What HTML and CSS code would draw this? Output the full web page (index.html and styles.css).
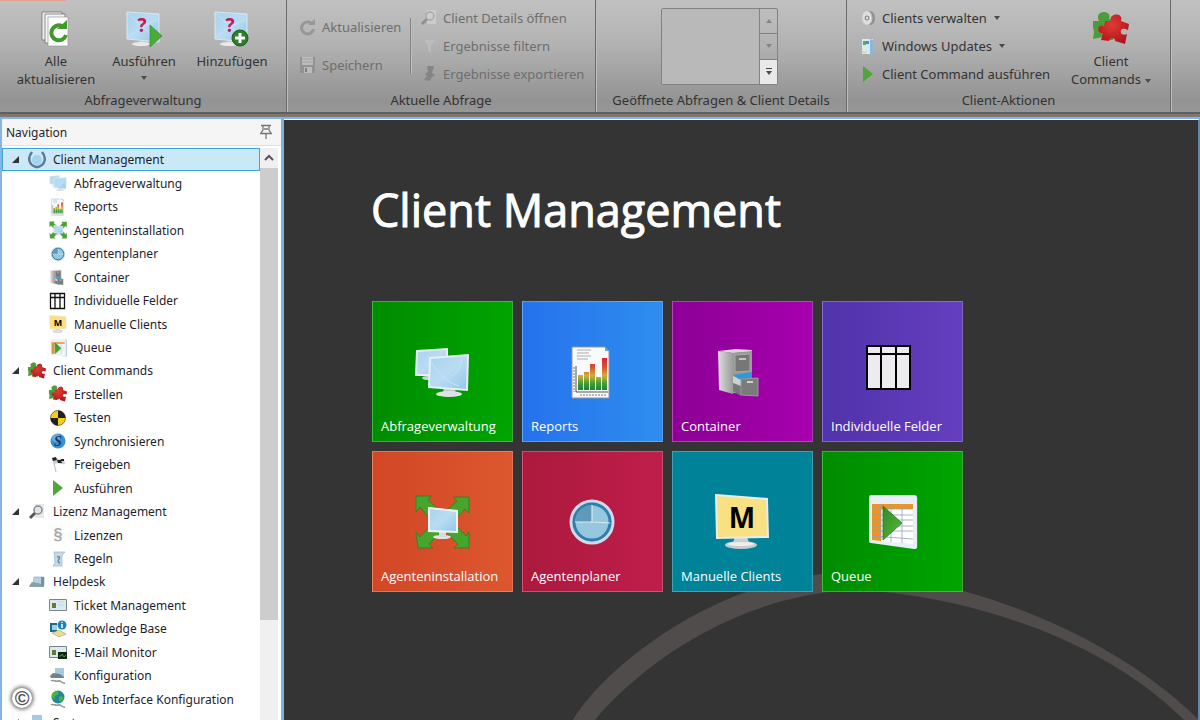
FILE: index.html
```
<!DOCTYPE html>
<html lang="de">
<head>
  <meta charset="UTF-8" />
  <meta name="viewport" content="width=device-width, initial-scale=1" />
  <title>Client Management</title>
  <link rel="stylesheet" href="styles.css">
</head>
<body>
  <svg class="defs" aria-hidden="true">
    <defs>
      <linearGradient id="g-screen" x1="0" y1="0" x2="1" y2="1">
        <stop offset="0" stop-color="#a9d3ee"/><stop offset=".5" stop-color="#b9dcf3"/><stop offset="1" stop-color="#93c5e8"/>
      </linearGradient>
      <linearGradient id="g-bar" gradientUnits="userSpaceOnUse" x1="0" y1="14" x2="0" y2="46">
        <stop offset="0" stop-color="#d8213c"/><stop offset=".3" stop-color="#d9552f"/><stop offset=".55" stop-color="#d3b03a"/><stop offset=".8" stop-color="#3f9d37"/><stop offset="1" stop-color="#1d8436"/>
      </linearGradient>
      <linearGradient id="g-metal" x1="0" y1="0" x2="1" y2="0">
        <stop offset="0" stop-color="#dcdcdc"/><stop offset="1" stop-color="#9b9b9b"/>
      </linearGradient>
      <linearGradient id="g-play" x1="0" y1="0" x2="1" y2="1">
        <stop offset="0" stop-color="#2f8c26"/><stop offset="1" stop-color="#5cb93c"/>
      </linearGradient>
      <radialGradient id="g-red" cx=".45" cy=".35" r=".8">
        <stop offset="0" stop-color="#e23a35"/><stop offset="1" stop-color="#a30d14"/>
      </radialGradient>

      <symbol id="i-monitors" viewBox="0 0 56 56">
        <ellipse cx="14" cy="34" rx="6" ry="2" fill="#c9d2d8"/>
        <path d="M3 7 33 5v26L2 31z" fill="url(#g-screen)" stroke="#e6eef4" stroke-width="2"/>
        <path d="M30 42h10l2 7H29z" fill="#c3c8cc"/>
        <ellipse cx="35" cy="50" rx="13" ry="3" fill="#dfe2e4"/>
        <path d="M16 14 54 11 53 46 15 43z" fill="url(#g-screen)" stroke="#e6eef4" stroke-width="2"/>
        <path d="M17 18q12 20 28 24M48 14q-2 14-10 18" fill="none" stroke="#c6e3f7" stroke-width="1"/>
      </symbol>
      <symbol id="i-report" viewBox="0 0 56 56">
        <path d="M8 3h33l4 4v47H8z" fill="#fafafa" stroke="#8f979f" stroke-width="1"/>
        <path d="M41 3v4h4z" fill="#5aa7ea"/>
        <path d="M13 6h14M13 9h12M13 12h14M13 15h11" stroke="#aaa" stroke-width="1"/>
        <g fill="url(#g-bar)"><rect x="14" y="31" width="5" height="15"/><rect x="20" y="28" width="5" height="18"/><rect x="26" y="20" width="5" height="26"/><rect x="32" y="33" width="5" height="13"/><rect x="38" y="14" width="5" height="32"/></g>
        <path d="M12 22v26h32" fill="none" stroke="#555"/>
        <path d="M10 23v25M16 51h26" stroke="#777" stroke-dasharray="2 1"/>
      </symbol>
      <symbol id="i-expand" viewBox="0 0 56 56">
        <g fill="#45a52c" stroke="#2d7d1e" stroke-width=".8">
          <path d="M2 2h15l-3 4 12 11-9 9L6 13l-4 5z"/>
          <path d="M55 3H39l4 4-12 11 9 9 11-12 4 4z"/>
          <path d="M4 54h15l-4-4 12-12-9-8L6 43l-4-5z"/>
          <path d="M55 54H40l4-4-12-12 9-8 11 12 3-4z"/>
        </g>
        <ellipse cx="28" cy="43" rx="9" ry="2" fill="#e4e4e4"/>
        <path d="M25 37h7v6h-7z" fill="#d5dadd"/>
        <path d="M15 14 43 17v21l-28-1z" fill="url(#g-screen)" stroke="#edf3f7" stroke-width="2"/>
      </symbol>
      <symbol id="i-clock" viewBox="0 0 56 56">
        <circle cx="28" cy="28" r="21" fill="#8fc4df" stroke="#cfdbe6" stroke-width="3"/>
        <circle cx="28" cy="28" r="18" fill="#95c8df" stroke="#2f7fae" stroke-width="3"/>
        <path d="M28 28V11a17 17 0 0 0-17 17z" fill="#5f9bb8"/>
        <path d="M28 11v17l18 1M11 28h17" fill="none" stroke="#dceaf2" stroke-width="1.200"/>
      </symbol>
      <symbol id="i-cabinet" viewBox="0 0 56 56">
        <path d="M4 7 19 9v41L5 46z" fill="url(#g-metal)"/>
        <path d="M4 7 22 5l16 1-1 2-18 1z" fill="#d7d7d7"/>
        <path d="M19 9 38 7v43l-19-1z" fill="#9a9a9a"/>
        <path d="M21 11 36 10v17l-15 1z" fill="#777" stroke="#a9a9a9"/>
        <path d="M25 15h7" stroke="#ddd" stroke-width="1.500"/>
        <path d="M19 31 38 28v7l-11 2z" fill="#2d9ad8"/>
        <path d="M19 32l8 4v14l-8-4z" fill="#cfcfcf"/>
        <path d="M19 39l8 3v10l-8-5z" fill="#777"/>
        <path d="M27 35l17-1v18l-17-1z" fill="#7b7b7b" stroke="#9a9a9a"/>
        <path d="M33 38h6" stroke="#eee" stroke-width="1.500"/>
      </symbol>
      <symbol id="i-table" viewBox="0 0 56 56">
        <path d="M3 2h43v43H3z" fill="#ececef"/>
        <path d="M3 2h43v43H3zM3 10h43M17 2v43M32 2v43" fill="none" stroke="#000" stroke-width="2"/>
      </symbol>
      <symbol id="i-table-sm" viewBox="0 0 18 18">
        <path d="M1.500 1.500h14v15h-14zM1.500 5.500h14M6 1.500v15M11 1.500v15" fill="#fff" stroke="#111" stroke-width="1.300"/>
      </symbol>
      <symbol id="i-mclient" viewBox="0 0 56 56">
        <path d="M21 43h12l3 8H18z" fill="#cfcfcf"/>
        <ellipse cx="27" cy="51" rx="16" ry="4" fill="#c9ccce"/>
        <ellipse cx="27" cy="50" rx="13" ry="2" fill="#eee"/>
        <path d="M2 1 53 5 54 43 3 44z" fill="#f7e183" stroke="#e9ecec" stroke-width="2"/>
        <text x="28" y="34" class="glyph-m">M</text>
      </symbol>
      <symbol id="i-queue" viewBox="0 0 56 56">
        <path d="M50 1l4 2v51l-4 1z" fill="#2f7fc0"/>
        <path d="M7 1h43q3 0 3 3v49q0 2-3 2L7 49q-2 0-2-2V3q0-2 2-2z" fill="#e8eff7"/>
        <path d="M8 10h41v40L8 46z" fill="#fff"/>
        <path d="M8 10h41v5H17v32l-9-1z" fill="#ee9420"/>
        <path d="M8 15h41M8 21h41M8 26h41M8 32h41M8 37h41M8 42l41 3M17 10v36M27 10v38M38 10v39" stroke="#8fa2c2" stroke-width=".8"/>
        <path d="M19 12 38 29 19 46z" fill="url(#g-play)" stroke="#2a7a22" stroke-width=".8"/>
      </symbol>
      <symbol id="i-puzzle" viewBox="0 0 36 36">
        <path d="M0 10h6c-3-6 1-9 5-9s7 3 5 7h4v21H13l-4-3-4 1-5 1 1-7-1-5z" fill="#4c9c3c"/>
        <path d="M12 10h6c-3-6 8-9 10-4 1 2 0 3 0 4l8 3-1 6c-6-3-8 0-7 3 1 2 4 2 6 1l-2 10-10-3c1-3-5-4-6 0l-8-1 2-7c-4 1-6-4-4-6 2-3 5-1 5 0z" fill="url(#g-red)"/>
      </symbol>
      <symbol id="i-hazard" viewBox="0 0 18 18">
        <circle cx="9" cy="9" r="7.500" fill="#f3cf1c" stroke="#333" stroke-width=".6"/>
        <path d="M9 9V1.500a7.500 7.500 0 0 1 7.500 7.500zM9 9v7.500a7.500 7.500 0 0 1-7.500-7.500z" fill="#1f1f26"/>
      </symbol>
      <symbol id="i-sync" viewBox="0 0 18 18">
        <circle cx="9" cy="9" r="7.500" fill="#3a8fce"/><circle cx="7" cy="6" r="4" fill="#7fbde8" opacity=".6"/>
        <text x="9" y="14" class="glyph-s">S</text>
      </symbol>
      <symbol id="i-flag" viewBox="0 0 18 18">
        <path d="M4 3l3 13" stroke="#bbb" stroke-width="1"/>
        <path d="M3 2c4-2 5 2 9 1l3 0 1 5c-4 1-5-2-11 0z" fill="#ccc"/>
        <path d="M3 2l4-1 1 3-4 1zM8 4l4 0 1 3-4 0zM12 3l3 0v2h-3z" fill="#222"/>
      </symbol>
      <symbol id="i-play" viewBox="0 0 18 18"><path d="M4 1l10 8-10 8z" fill="#4fa63b"/></symbol>
      <symbol id="i-wreath" viewBox="0 0 18 18">
        <circle cx="9" cy="9" r="5" fill="#a3d3f0"/>
        <path d="M4 1C-1 7 1 14 8 16h2C17 14 19 7 14 1" fill="none" stroke="#5b7c96" stroke-width="2.500"/>
      </symbol>
      <symbol id="i-lens" viewBox="0 0 18 18">
        <path d="M7 1h9v14H7z" fill="#e8e8e8"/>
        <path d="M2 15l5-5" stroke="#555" stroke-width="3"/>
        <circle cx="10" cy="7" r="4" fill="#dfe8ee" stroke="#888" stroke-width="1.500"/>
      </symbol>
      <symbol id="i-para" viewBox="0 0 18 18"><text x="9" y="14" class="glyph-p">§</text></symbol>
      <symbol id="i-scroll" viewBox="0 0 18 18">
        <path d="M5 2h11l-3 3v11H4l2-3z" fill="#c3d9e8" stroke="#9db4c4" stroke-width=".7"/>
        <path d="M8 7q4-1 2 2t1 4" fill="none" stroke="#6d8ca4" stroke-width="1.500"/>
      </symbol>
      <symbol id="i-desk" viewBox="0 0 18 18">
        <path d="M6 4h10v8H5z" fill="#b5d1e0" stroke="#8aa1af" stroke-width=".6"/>
        <path d="M1 13l3-4 6 1 6 2v2H2z" fill="#8ba0ab"/><path d="M13 4h3v9h-3z" fill="#6e94ab"/>
      </symbol>
      <symbol id="i-ticket" viewBox="0 0 18 18">
        <path d="M.5 3.500h17v11H.5z" fill="#dce9ed" stroke="#78858c"/>
        <path d="M3 7h4v5H3z" fill="#5f7d35"/><path d="M9 6h6M9 9h6" stroke="#c4d8e2"/>
      </symbol>
      <symbol id="i-book" viewBox="0 0 18 18">
        <path d="M1 3h7v9H1z" fill="#1f6c86"/><path d="M3 5h5v5H3z" fill="#9fd0e0"/>
        <path d="M3 13l7-3 7 4-7 3z" fill="#e9dc9a" stroke="#938a55" stroke-width=".5"/>
        <circle cx="13" cy="5" r="4.500" fill="#1c82ba"/><path d="M13 4v4M13 2v1" stroke="#fff" stroke-width="1.500"/>
      </symbol>
      <symbol id="i-mail" viewBox="0 0 18 18">
        <path d="M.5 3.500h17v11H.5z" fill="#dce9ed" stroke="#78858c"/>
        <path d="M3 7h4v5H3z" fill="#5f7d35"/><path d="M9 9h9v7H9z" fill="#10240f"/>
        <path d="M10 13h2l1-2 2 3 2-2" fill="none" stroke="#4bbd47" stroke-width=".8"/>
      </symbol>
      <symbol id="i-config" viewBox="0 0 18 18">
        <path d="M6 1h9v9H6z" fill="#a9c9dc"/><path d="M1 9l3-3 7 1 4 3v1H2z" fill="#6d8492"/>
        <path d="M2 14c2-2 4 1 7 0s4 3 7 2" fill="none" stroke="#93989c" stroke-width="1.500"/>
      </symbol>
      <symbol id="i-globe" viewBox="0 0 18 18">
        <circle cx="9" cy="7" r="6.500" fill="#1d8a95"/>
        <path d="M5 2c4-2 6 0 4 2S5 6 6 8s-2 1-3-1 0-4 2-5zM10 7c3-2 5 0 4 2s-4 4-4 1z" fill="#48b441"/>
        <path d="M2 15c2-2 4 1 7 0s4 3 7 2" fill="none" stroke="#93989c" stroke-width="1.500"/>
      </symbol>
      <symbol id="i-system" viewBox="0 0 18 18"><path d="M4 1h10v16H4z" fill="#a5c9e2"/></symbol>

      <symbol id="i-query" viewBox="0 0 36 36">
        <path d="M13 30h9l1 4H11z" fill="#ccc"/><ellipse cx="15" cy="33" rx="9" ry="2" fill="#e9e9e9"/>
        <path d="M1 1 33 3v28L1 28z" fill="url(#g-screen)" stroke="#dce7ee"/>
        <path d="M2 2l14 14L32 8M2 26l14-10 16 12" fill="none" stroke="#c9e4f5" stroke-width=".8"/>
        <text x="16" y="21" class="glyph-q">?</text>
      </symbol>
      <symbol id="i-refresh" viewBox="0 0 18 18">
        <path d="M12 5a6 6 0 1 0 2.500 6" fill="none" stroke="currentColor" stroke-width="3"/>
        <path d="M9 7h7V1z" fill="currentColor"/>
      </symbol>
      <symbol id="i-save" viewBox="0 0 18 18">
        <path d="M1 1h15v16H1z" fill="#929292"/><path d="M3 1h11v8H3z" fill="#bcbcbc"/><path d="M3 3h11M3 6h11" stroke="#a4a4a4"/>
        <path d="M5 11h8v6H5z" fill="#bbb"/><path d="M6 12h2v4H6z" fill="#808080"/>
      </symbol>
      <symbol id="i-funnel" viewBox="0 0 18 18"><path d="M4 3h11l-4 6v7l-3-2V9z" fill="#bcbcbc"/></symbol>
      <symbol id="i-export" viewBox="0 0 18 18"><path d="M7 1h7l-2 7 3 2-3 2-2 4-6-1 3-4-2-2 3-2z" fill="#858585"/></symbol>
      <symbol id="i-gear" viewBox="0 0 18 18">
        <ellipse cx="11" cy="9" rx="5" ry="7" fill="#8f8f8f"/><ellipse cx="8" cy="9" rx="5" ry="7" fill="#dedede" stroke="#c4c4c4" stroke-dasharray="2 1"/>
        <circle cx="8" cy="9" r="2" fill="none" stroke="#777"/>
      </symbol>
      <symbol id="i-update" viewBox="0 0 18 18">
        <path d="M3 2h11v15H3z" fill="#d9e9f3"/><path d="M11 2l3 1v14h-3z" fill="#86b9de"/>
        <path d="M4 4h3v4H4z" fill="#5fae4d"/><path d="M7 4h3v3H7z" fill="#3f8fd0"/><path d="M2 14q4 3 6 0" stroke="#d8c85d" fill="none"/>
      </symbol>
    </defs>
  </svg>

  <header class="ribbon">
    <section class="group group-query">
      <div class="group-body">
        <button class="big">
          <svg viewBox="0 0 36 36">
            <path d="M4 1h20v28H4z" fill="#eee" stroke="#666" stroke-width=".7"/>
            <path d="M7 3h20v29H7z" fill="#f4f4f4" stroke="#666" stroke-width=".7"/>
            <path d="M10 6h20v29H10z" fill="#fff" stroke="#999" stroke-width=".7"/>
            <path d="M24 15a7.500 7.500 0 1 0 4 9" fill="none" stroke="#3f9a2c" stroke-width="4"/>
            <path d="M19 18h10V9z" fill="#3f9a2c"/>
          </svg>
          <span>Alle<br>aktualisieren</span>
        </button>
        <button class="big">
          <svg viewBox="0 0 36 36"><use href="#i-query"/><path d="M24 14l12 11-12 11z" fill="#4bab38" stroke="#2f8425" stroke-width=".6"/></svg>
          <span>Ausführen</span>
          <i class="caret"></i>
        </button>
        <button class="big">
          <svg viewBox="0 0 36 36"><use href="#i-query"/><circle cx="26" cy="27" r="8" fill="#2e7d28" stroke="#1e5c1d"/><path d="M26 22v10M21 27h10" stroke="#fff" stroke-width="3"/></svg>
          <span>Hinzufügen</span>
        </button>
      </div>
      <h2>Abfrageverwaltung</h2>
    </section>

    <section class="group group-current">
      <div class="group-body">
        <div class="stack two">
          <button class="small" disabled><svg class="dim"><use href="#i-refresh"/></svg>Aktualisieren</button>
          <button class="small" disabled><svg><use href="#i-save"/></svg>Speichern</button>
        </div>
        <div class="stack split">
          <button class="small" disabled><svg class="faded"><use href="#i-lens"/></svg>Client Details öffnen</button>
          <button class="small" disabled><svg><use href="#i-funnel"/></svg>Ergebnisse filtern</button>
          <button class="small" disabled><svg><use href="#i-export"/></svg>Ergebnisse exportieren</button>
        </div>
      </div>
      <h2>Aktuelle Abfrage</h2>
    </section>

    <section class="group group-open">
      <div class="group-body">
        <div class="gallery">
          <div class="gallery-list"></div>
          <div class="gallery-buttons">
            <button disabled aria-label="Nach oben"><i class="caret up"></i></button>
            <button disabled aria-label="Nach unten"><i class="caret"></i></button>
            <button class="more" aria-label="Mehr"><i class="caret"></i></button>
          </div>
        </div>
      </div>
      <h2>Geöffnete Abfragen &amp; Client Details</h2>
    </section>

    <section class="group group-actions">
      <div class="group-body">
        <div class="stack">
          <button class="small"><svg><use href="#i-gear"/></svg>Clients verwalten<i class="caret"></i></button>
          <button class="small"><svg><use href="#i-update"/></svg>Windows Updates<i class="caret"></i></button>
          <button class="small"><svg><use href="#i-play"/></svg>Client Command ausführen</button>
        </div>
        <button class="big">
          <svg><use href="#i-puzzle"/></svg>
          <span>Client<br>Commands<i class="caret"></i></span>
        </button>
      </div>
      <h2>Client-Aktionen</h2>
    </section>
  </header>

  <div class="workspace">
    <aside class="nav">
      <div class="nav-head">
        <h2>Navigation</h2>
        <svg class="pin" viewBox="0 0 14 16"><path d="M2 1.500h10M4 2v4L2 9M10 2v4l2 3M1 9.500h12M7 10v5M5 5h4" fill="none" stroke="#777" stroke-width="1.300"/></svg>
      </div>
      <div class="nav-body">
        <ul class="tree">
          <li>
            <a class="node selected" href="#"><i class="twist"></i><svg><use href="#i-wreath"/></svg>Client Management</a>
            <ul>
              <li><a href="#"><svg><use href="#i-monitors"/></svg>Abfrageverwaltung</a></li>
              <li><a href="#"><svg><use href="#i-report"/></svg>Reports</a></li>
              <li><a href="#"><svg><use href="#i-expand"/></svg>Agenteninstallation</a></li>
              <li><a href="#"><svg><use href="#i-clock"/></svg>Agentenplaner</a></li>
              <li><a href="#"><svg><use href="#i-cabinet"/></svg>Container</a></li>
              <li><a href="#"><svg><use href="#i-table-sm"/></svg>Individuelle Felder</a></li>
              <li><a href="#"><svg><use href="#i-mclient"/></svg>Manuelle Clients</a></li>
              <li><a href="#"><svg><use href="#i-queue"/></svg>Queue</a></li>
            </ul>
          </li>
          <li>
            <a class="node" href="#"><i class="twist"></i><svg><use href="#i-puzzle"/></svg>Client Commands</a>
            <ul>
              <li><a href="#"><svg><use href="#i-puzzle"/></svg>Erstellen</a></li>
              <li><a href="#"><svg><use href="#i-hazard"/></svg>Testen</a></li>
              <li><a href="#"><svg><use href="#i-sync"/></svg>Synchronisieren</a></li>
              <li><a href="#"><svg><use href="#i-flag"/></svg>Freigeben</a></li>
              <li><a href="#"><svg><use href="#i-play"/></svg>Ausführen</a></li>
            </ul>
          </li>
          <li>
            <a class="node" href="#"><i class="twist"></i><svg><use href="#i-lens"/></svg>Lizenz Management</a>
            <ul>
              <li><a href="#"><svg><use href="#i-para"/></svg>Lizenzen</a></li>
              <li><a href="#"><svg><use href="#i-scroll"/></svg>Regeln</a></li>
            </ul>
          </li>
          <li>
            <a class="node" href="#"><i class="twist"></i><svg><use href="#i-desk"/></svg>Helpdesk</a>
            <ul>
              <li><a href="#"><svg><use href="#i-ticket"/></svg>Ticket Management</a></li>
              <li><a href="#"><svg><use href="#i-book"/></svg>Knowledge Base</a></li>
              <li><a href="#"><svg><use href="#i-mail"/></svg>E-Mail Monitor</a></li>
              <li><a href="#"><svg><use href="#i-config"/></svg>Konfiguration</a></li>
              <li><a href="#"><svg><use href="#i-globe"/></svg>Web Interface Konfiguration</a></li>
            </ul>
          </li>
          <li>
            <a class="node" href="#"><i class="twist"></i><svg><use href="#i-system"/></svg>System</a>
          </li>
        </ul>
        <div class="scrollbar">
          <svg viewBox="0 0 18 20"><path d="M5 12l4-4 4 4" fill="none" stroke="#555" stroke-width="2"/></svg>
          <div class="thumb"></div>
        </div>
      </div>
      <span class="copyright">©</span>
    </aside>

    <main class="start">
      <svg class="arc" viewBox="574 570 625 150" aria-hidden="true">
        <path d="M574 720C605 668 718 575 850 572 920 572 1090 612 1200 720H1185C1085 620 920 590 850 590 722 598 628 680 596 720z" fill="#504c4c"/>
      </svg>
      <h1>Client Management</h1>
      <div class="tiles">
        <a class="tile green" href="#"><svg><use href="#i-monitors"/></svg><span>Abfrageverwaltung</span></a>
        <a class="tile blue" href="#"><svg><use href="#i-report"/></svg><span>Reports</span></a>
        <a class="tile purple" href="#"><svg><use href="#i-cabinet"/></svg><span>Container</span></a>
        <a class="tile violet" href="#"><svg><use href="#i-table"/></svg><span>Individuelle Felder</span></a>
        <a class="tile orange" href="#"><svg><use href="#i-expand"/></svg><span>Agenteninstallation</span></a>
        <a class="tile crimson" href="#"><svg><use href="#i-clock"/></svg><span>Agentenplaner</span></a>
        <a class="tile teal" href="#"><svg><use href="#i-mclient"/></svg><span>Manuelle Clients</span></a>
        <a class="tile green" href="#"><svg><use href="#i-queue"/></svg><span>Queue</span></a>
      </div>
    </main>
  </div>
</body>
</html>
```
FILE: styles.css
```
* { box-sizing: border-box; }
body {
  margin: 0;
  height: 100vh;
  display: flex;
  flex-direction: column;
  overflow: hidden;
  background: #7b7774;
  color: #333;
  font: 13px "Noto Sans", "Open Sans", sans-serif;
}
h1, h2, ul { margin: 0; padding: 0; font-weight: normal; }
ul { list-style: none; }
a { color: inherit; text-decoration: none; }
button { padding: 0; border: 0; background: none; color: inherit; font: inherit; }
.defs { position: absolute; width: 0; height: 0; }
.glyph-m { font: bold 28px "Noto Sans", sans-serif; text-anchor: middle; fill: #000; }
.glyph-s { font: italic bold 14px "Liberation Serif", serif; text-anchor: middle; fill: #123a66; }
.glyph-p { font: bold 16px "Liberation Sans", sans-serif; text-anchor: middle; fill: #aaa; }
.glyph-q { font: bold 19px "Noto Sans", sans-serif; text-anchor: middle; fill: #c9155a; }

/* ribbon */
.ribbon {
  position: relative;
  display: flex;
  flex: none;
  border-bottom: 2px solid #5f5f5d;
  background: linear-gradient(#c1c1c1, #b2b2b2 40%, #939393 90%, #979797);
}
.ribbon::before {
  content: "";
  position: absolute;
  left: 0;
  top: 0;
  width: 66px;
  height: 1px;
  background: #e3a18c;
}
.group {
  display: flex;
  flex-direction: column;
  border-right: 1px solid #6c6c6c;
  box-shadow: 1px 0 #bdbdbd;
}
.group-query { width: 287px; }
.group-current { width: 309px; }
.group-open { width: 251px; }
.group-actions { width: 324px; }
.group-body { display: flex; height: 88px; padding-top: 4px; }
.group h2 { font-size: 13px; line-height: 24px; text-align: center; }
.group-query .group-body { padding-left: 12px; }
.group-current .group-body { padding-left: 12px; }
.group-open .group-body { justify-content: center; padding-right: 3px; }
.group-actions .group-body { padding: 4px 15px 0 12px; justify-content: space-between; }

.big {
  display: flex;
  flex-direction: column;
  align-items: center;
  width: 88px;
  padding-top: 6px;
  line-height: 18px;
}
.big svg { width: 36px; height: 38px; margin-bottom: 4px; }
.big > .caret { margin-top: 6px; }
.stack { display: flex; flex-direction: column; }
.small { display: flex; align-items: center; height: 28px; gap: 5px; white-space: nowrap; }
.small:disabled { color: #6e6e6e; }
.small svg { width: 18px; height: 18px; }
.two { width: 111px; padding-top: 4px; }
.two .small { height: 38px; }
.split { position: relative; padding-left: 10px; }
.split::before {
  content: "";
  position: absolute;
  left: 0;
  top: 14px;
  height: 56px;
  border-left: 1px solid #838383;
  border-right: 1px solid #bfbfbf;
}
.dim { color: #979797; }
.faded { opacity: .4; filter: grayscale(1); }
.caret {
  display: inline-block;
  border: 3px solid transparent;
  border-top: 4px solid #4a4a4a;
  border-bottom: 0;
  margin-left: 4px;
  vertical-align: middle;
}
.small .caret { margin-left: 2px; }
.big > .caret, .gallery .caret { margin-left: 0; }
.gallery { display: flex; width: 117px; height: 77px; margin-top: 4px; border: 1px solid #828282; border-radius: 2px; }
.gallery-list { flex: 1; background: #b9b9b9; }
.gallery-buttons { display: flex; flex-direction: column; width: 18px; border-left: 1px solid #828282; }
.gallery-buttons button { display: flex; flex: 1; flex-direction: column; align-items: center; justify-content: center; }
.gallery-buttons button + button { border-top: 1px solid #828282; }
.gallery-buttons :disabled .caret { border-top-color: #858585; }
.gallery-buttons .caret.up { transform: rotate(180deg); }
.gallery-buttons .more { background: #e9e9e9; }
.more::before { content: ""; width: 6px; height: 1px; margin-bottom: 2px; background: #444; }

/* workspace */
.workspace { display: flex; flex: 1; min-height: 0; margin-top: 3px; border-top: 2px solid #86b5e2; }
.nav {
  position: relative;
  display: flex;
  flex: none;
  flex-direction: column;
  width: 284px;
  border-left: 2px solid #86b5e2;
  border-right: 3px solid #7fb2e4;
  background: #fff;
  color: #1e1e2e;
}
.nav-head {
  display: flex;
  align-items: center;
  justify-content: space-between;
  height: 27px;
  padding: 0 8px 0 4px;
  border-bottom: 1px solid #dedede;
  background: #f5f5f5;
}
.nav-head h2 { font-size: 12px; }
.pin { width: 14px; height: 16px; }
.nav-body { display: flex; flex: 1; min-height: 0; padding: 2px 3px 0 0; }
.tree { flex: 1; overflow: hidden; font-size: 12px; }
.tree a { display: flex; align-items: center; height: 24px; padding-left: 47px; gap: 7px; white-space: nowrap; }
.tree ul li:nth-child(even) a, .tree .node { height: 23px; }
.tree svg { flex: none; width: 18px; height: 18px; }
.tree .node { padding-left: 10px; }
.tree .selected { padding-left: 9px; border: 1px solid #35a8d8; background: #cbe8f6; }
.twist { width: 7px; height: 7px; margin-right: 2px; background: #333; clip-path: polygon(100% 0, 100% 100%, 0 100%); }
.scrollbar { width: 18px; background: #f0f0f0; }
.scrollbar svg { display: block; width: 18px; height: 20px; }
.thumb { height: 79%; background: #cdcdcd; }
.copyright {
  position: absolute;
  left: 10px;
  bottom: 12px;
  width: 20px;
  height: 20px;
  border-radius: 50%;
  background: #fff;
  box-shadow: 0 0 4px 1px #555;
  color: #555;
  font: bold 20px/20px "Liberation Sans", sans-serif;
  text-align: center;
}

/* start page */
.start {
  position: relative;
  flex: 1;
  padding: 60px 87px;
  border-top: 1px solid #fff;
  border-right: 2px solid #5f88ac;
  background: #343434;
  color: #fff;
}
.arc { position: absolute; right: 0; bottom: 0; width: 625px; height: 150px; }
h1 { font: 45px/60px "Open Sans", sans-serif; -webkit-text-stroke: 1px #fff; white-space: nowrap; }
.tiles { position: relative; display: grid; grid-template-columns: repeat(4, 141px); gap: 9px; margin: 61px 1px 0; }
.tile {
  display: flex;
  flex-direction: column;
  align-items: center;
  height: 141px;
  padding: 42px 10px 5px 8px;
  border: 1px solid rgba(255, 255, 255, .25);
  font: 13px/20px "Open Sans", sans-serif;
}
.tile svg { width: 56px; height: 56px; }
.tile span { align-self: flex-start; margin-top: auto; }
.green { background: linear-gradient(90deg, #008c00, #00a400); }
.blue { background: linear-gradient(90deg, #2672ec, #2e8def); }
.purple { background: linear-gradient(90deg, #8c0095, #a700ae); }
.violet { background: linear-gradient(90deg, #5133ab, #643ebf); }
.orange { background: linear-gradient(90deg, #d24726, #dc572e); }
.crimson { background: linear-gradient(90deg, #ac193d, #bf1e4b); }
.teal { background: #008299; }
```
